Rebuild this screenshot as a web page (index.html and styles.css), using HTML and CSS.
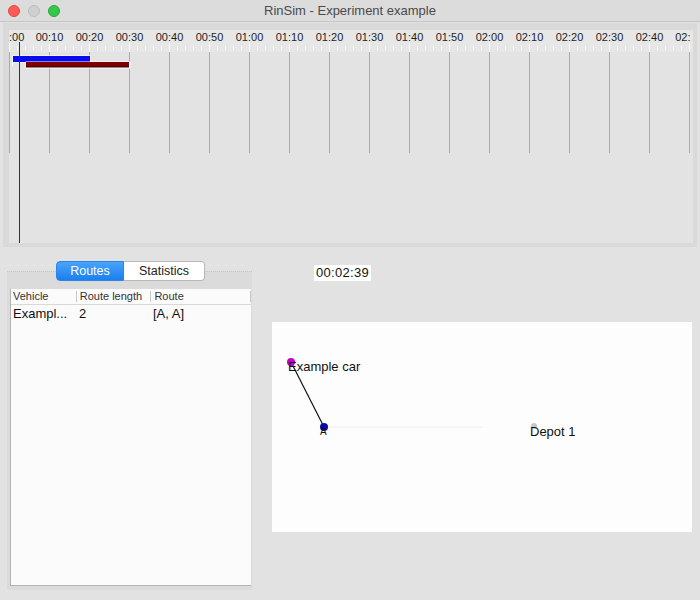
FILE: index.html
```html
<!DOCTYPE html>
<html>
<head>
<meta charset="utf-8">
<link rel="stylesheet" href="styles.css">
</head>
<body>
<div class="window">
  <div class="titlebar">
    <div class="lights">
      <span class="light red"></span>
      <span class="light gray"></span>
      <span class="light green"></span>
    </div>
    <div class="title">RinSim - Experiment example</div>
  </div>

  <div class="timeline-frame">
    <svg class="timeline" width="684" height="213" viewBox="0 0 684 213">
      <rect x="0" y="0" width="684" height="22" fill="#e7e7e7"/>
      <g font-family="Liberation Sans, Arial, sans-serif" font-size="11" fill="#1e1e1e" text-anchor="middle" id="labels"></g>
      <g id="ticks" stroke="#ffffff" stroke-width="1"></g>
      <g id="grid" stroke="#ababab" stroke-width="1"></g>
      <rect x="3.5" y="25.5" width="78" height="7" fill="#ffffff"/>
      <rect x="4" y="26" width="77" height="6" fill="#0a0aee"/>
      <rect x="16.5" y="31.5" width="105" height="7" fill="#ffffff"/>
      <rect x="17" y="32" width="103" height="5" fill="#7c0000"/>
      <line x1="17" y1="37" x2="120" y2="37" stroke="#3a0000"/>
      <line x1="3.5" y1="31" x2="3.5" y2="36" stroke="#ffffff"/>
      <rect x="10" y="12" width="1" height="201" fill="#960808"/>
    </svg>
  </div>

  <div class="bottom">
    <div class="left">
      <div class="tabs">
        <span class="tab active">Routes</span>
        <span class="tab">Statistics</span>
      </div>
      <div class="group">
        <div class="table">
          <div class="thead">
            <span class="c1">Vehicle</span>
            <span class="c2">Route length</span>
            <span class="c3">Route</span>
          </div>
          <div class="trow">
            <span class="c1">Exampl...</span>
            <span class="c2">2</span>
            <span class="c3">[A, A]</span>
          </div>
        </div>
      </div>
    </div>
    <div class="right">
      <div class="timer">00:02:39</div>
      <svg class="map" width="420" height="210" viewBox="0 0 420 210">
        <line x1="52" y1="105" x2="211" y2="105" stroke="#eeeeee"/>
        <line x1="19" y1="40" x2="52" y2="105" stroke="#111111" stroke-width="1.2"/>
        <circle cx="19" cy="40" r="4" fill="#c400c4"/>
        <circle cx="52" cy="105" r="4" fill="#0a0aa8"/>
        <circle cx="262" cy="104" r="3" fill="#c8c8c8"/>
        <g font-family="Liberation Sans, Arial, sans-serif" fill="#111111">
          <text x="16" y="49" font-size="13">Example car</text>
          <text x="48" y="113" font-size="10">A</text>
          <text x="258" y="114" font-size="13">Depot 1</text>
        </g>
      </svg>
    </div>
  </div>
</div>
<script src="app.js"></script>
</body>
</html>
```

FILE: app.js
```js
(function () {
  var ns = "http://www.w3.org/2000/svg";
  var labels = document.getElementById("labels");
  var ticks = document.getElementById("ticks");
  var grid = document.getElementById("grid");
  function pad(n) { return (n < 10 ? "0" : "") + n; }
  for (var k = 0; k <= 17; k++) {
    var x = 40 * k + 0.5;
    var secs = k * 10;
    var t = document.createElementNS(ns, "text");
    var txt = pad(Math.floor(secs / 60)) + ":" + pad(secs % 60);
    if (k === 0) {
      txt = ":00";
      t.setAttribute("text-anchor", "start");
      t.setAttribute("x", 0);
    } else if (k === 17) {
      txt = "02:";
      t.setAttribute("text-anchor", "end");
      t.setAttribute("x", x + 1);
    } else {
      t.setAttribute("x", x);
    }
    t.setAttribute("y", 11);
    t.textContent = txt;
    labels.appendChild(t);
    var l = document.createElementNS(ns, "line");
    l.setAttribute("x1", x); l.setAttribute("x2", x);
    l.setAttribute("y1", 13); l.setAttribute("y2", 22);
    ticks.appendChild(l);
    var g = document.createElementNS(ns, "line");
    g.setAttribute("x1", x); g.setAttribute("x2", x);
    g.setAttribute("y1", 22); g.setAttribute("y2", 123);
    grid.appendChild(g);
    for (var m = 1; m < 5; m++) {
      var mx = x + m * 8;
      if (mx > 684) break;
      var ml = document.createElementNS(ns, "line");
      ml.setAttribute("x1", mx); ml.setAttribute("x2", mx);
      ml.setAttribute("y1", 16); ml.setAttribute("y2", 20);
      ticks.appendChild(ml);
    }
  }
})();
```

FILE: styles.css
```css
html, body {
  margin: 0;
  padding: 0;
}
body {
  width: 700px;
  height: 600px;
  overflow: hidden;
  background: #e2e2e2;
  font-family: "Liberation Sans", Arial, sans-serif;
}
.window {
  display: flex;
  flex-direction: column;
  height: 600px;
}
.titlebar {
  height: 21px;
  border-bottom: 1px solid #c6c6c6;
  background: #dcdcdc;
  display: flex;
  align-items: center;
  position: relative;
}
.lights {
  display: flex;
  gap: 8px;
  padding-left: 8px;
}
.light {
  width: 12px;
  height: 12px;
  border-radius: 50%;
  box-sizing: border-box;
}
.light.red { background: #fc5b57; border: 1px solid #e2463f; }
.light.gray { background: #cfcfcf; border: 1px solid #bdbdbd; }
.light.green { background: #34c84a; border: 1px solid #24a934; }
.title {
  flex: 1;
  text-align: center;
  font-size: 13px;
  color: #4a4a4a;
  margin-right: 60px;
}
.timeline-frame {
  margin: 1px 3px 0 3px;
  padding: 7px 4px 4px 6px;
  background: #d9d9d9;
  display: flex;
}
.timeline {
  display: block;
  background: #e3e3e3;
}
.bottom {
  display: flex;
  flex: 1;
}
.left {
  width: 245px;
  margin-left: 7px;
  display: flex;
  flex-direction: column;
  align-items: center;
  margin-top: 14px;
}
.tabs {
  display: flex;
  height: 20px;
  position: relative;
  z-index: 1;
  margin-left: 2px;
}
.tab {
  font-size: 12.5px;
  line-height: 18px;
  padding: 0 9px;
  border: 1px solid #b8b8b8;
  border-left: none;
  background: #ffffff;
  color: #222;
  border-radius: 0 4px 4px 0;
  width: 62px;
  text-align: center;
}
.tab.active {
  width: 48px;
  background: linear-gradient(#4aa3fa, #1b7ff1);
  color: #ffffff;
  border: 1px solid #2a86ee;
  border-radius: 4px 0 0 4px;
}
.group {
  align-self: stretch;
  margin-top: -10px;
  border-top: 1px dotted #c4c4c4;
  background: #dbdbdb;
  padding: 17px 1px 3px 3px;
  height: 298px;
}
.table {
  background: #fbfbfb;
  border: 1px solid #b3b3b3;
  border-top: none;
  border-right: none;
  height: 297px;
  box-sizing: border-box;
}
.thead, .trow {
  display: flex;
  color: #111;
}
.thead {
  height: 15px;
  border-bottom: 1px solid #d8d8d8;
  font-size: 11px;
  line-height: 15px;
  color: #333;
}
.thead span {
  border-right: 1px solid #c8c8c8;
  margin: 2px 0;
  line-height: 11px;
}
.trow {
  font-size: 13px;
  line-height: 18px;
}
.c1 { width: 63px; padding-left: 2px; }
.c2 { width: 71px; padding-left: 3px; }
.c3 { width: 96px; padding-left: 3px; }
.trow .c1, .trow .c2, .trow .c3 { border: none; }
.right {
  flex: 1;
  display: flex;
  flex-direction: column;
  align-items: flex-start;
  padding-left: 20px;
  padding-top: 18px;
}
.timer {
  margin-left: 42px;
  background: #ffffff;
  font-size: 13px;
  letter-spacing: 0.3px;
  line-height: 16px;
  padding: 0 2px;
  color: #111;
}
.map {
  display: block;
  margin-top: 41px;
  background: #fdfdfd;
}
```
